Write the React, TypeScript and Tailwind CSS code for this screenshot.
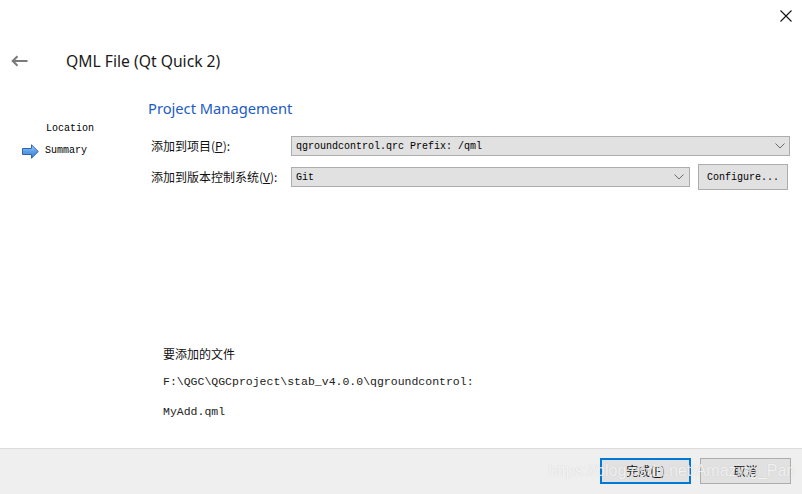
import React from "react";

const cjk = { fontFamily: '"Noto Sans CJK SC", "Noto Sans", sans-serif' };
const mono = { fontFamily: '"Liberation Mono", "Noto Sans CJK SC", monospace' };

function Chevron() {
  return (
    <svg width="10" height="6" viewBox="0 0 10 6" className="shrink-0">
      <path d="M0.5 0.5 L5 5 L9.5 0.5" fill="none" stroke="#6a6a6a" strokeWidth="1" />
    </svg>
  );
}

function BlueArrow() {
  return (
    <svg width="17" height="15" viewBox="0 0 17 15">
      <defs>
        <linearGradient id="ba" x1="0" y1="0" x2="0" y2="1">
          <stop offset="0" stopColor="#a8d0f5" />
          <stop offset="0.5" stopColor="#5a9ee6" />
          <stop offset="1" stopColor="#3a7fd0" />
        </linearGradient>
      </defs>
      <path
        d="M0.5 4.5 H9.5 V0.8 L16.3 7.5 L9.5 14.2 V10.5 H0.5 Z"
        fill="url(#ba)"
        stroke="#2f64b0"
        strokeWidth="1"
        strokeLinejoin="round"
      />
    </svg>
  );
}

export default function App() {
  return (
    <div className="relative w-[802px] h-[494px] bg-white flex flex-col overflow-hidden text-black" style={{ fontFamily: '"Noto Sans", sans-serif' }}>
      {/* top bar */}
      <div className="h-[32px] flex justify-end items-center pr-[10px] shrink-0">
        <svg width="12" height="12" viewBox="0 0 12 12">
          <path d="M0.5 0.5 L11.5 11.5 M11.5 0.5 L0.5 11.5" stroke="#111" strokeWidth="1.1" />
        </svg>
      </div>

      {/* title row */}
      <div className="h-[58px] flex items-center shrink-0">
        <div className="w-[66px] pl-[11px] flex items-center">
          <svg width="17" height="12" viewBox="0 0 17 12">
            <path d="M16.5 6 H2 M6.5 1.2 L1.7 6 L6.5 10.8" fill="none" stroke="#7a7a7a" strokeWidth="2" />
          </svg>
        </div>
        <div className="text-[15.7px] leading-[20px] text-[#1a1a1a]">QML File (Qt Quick 2)</div>
      </div>

      {/* body */}
      <div className="flex-1 flex">
        <div className="w-[148px] shrink-0 pt-[32px] text-[10px] leading-[14px]" style={mono}>
          <div className="pl-[46px]">Location</div>
          <div className="flex items-center mt-[8px] pl-[22px] gap-[6px]">
            <BlueArrow />
            <span className="-mt-[1px]">Summary</span>
          </div>
        </div>

        <div className="flex-1 flex flex-col pt-[8px]">
          <div className="text-[14.7px] leading-[20px] text-[#1b5cc4]">Project Management</div>

          <div className="mt-[18px] flex items-center h-[20px]">
            <div className="w-[143px] pl-[3px] text-[12px] text-[#111]" style={cjk}>
              添加到项目(<span className="underline">P</span>):
            </div>
            <div className="w-[499px] h-[20px] bg-[#e1e1e1] border border-[#adadad] flex items-center justify-between pl-[4px] pr-[4px]">
              <span className="text-[10px]" style={mono}>qgroundcontrol.qrc Prefix: /qml</span>
              <Chevron />
            </div>
          </div>

          <div className="mt-[8px] flex items-center h-[26px]">
            <div className="w-[143px] pl-[3px] text-[12px] text-[#111] whitespace-nowrap" style={cjk}>
              添加到版本控制系统(<span className="underline">V</span>):
            </div>
            <div className="w-[399px] h-[20px] bg-[#e1e1e1] border border-[#adadad] flex items-center justify-between pl-[4px] pr-[5px]">
              <span className="text-[10px]" style={mono}>Git</span>
              <Chevron />
            </div>
            <div className="ml-[8px] w-[90px] h-[26px] bg-[#e1e1e1] border border-[#adadad] flex items-center justify-center">
              <span className="text-[10px]" style={mono}>Configure...</span>
            </div>
          </div>

          <div className="mt-[156px] pl-[15px] text-[12px] leading-[16px] text-[#111]" style={cjk}>要添加的文件</div>
          <div className="mt-[12px] pl-[15px] text-[11.5px] leading-[16px] text-[#222]" style={mono}>
            F:\QGC\QGCproject\stab_v4.0.0\qgroundcontrol:
          </div>
          <div className="mt-[14px] pl-[15px] text-[11.5px] leading-[16px] text-[#222]" style={mono}>MyAdd.qml</div>
        </div>
      </div>

      {/* footer */}
      <div className="h-[46px] shrink-0 bg-[#efefef] border-t border-[#dcdcdc] flex items-start justify-end pt-[9px] pr-[11px] gap-[9px]">
        <div className="w-[91px] h-[26px] bg-[#e1e1e1] border-2 border-[#0078d7] flex items-center justify-center text-[12px] text-[#111]" style={cjk}>
          完成(<span className="underline">F</span>)
        </div>
        <div className="w-[91px] h-[26px] bg-[#e1e1e1] border border-[#adadad] flex items-center justify-center text-[12px] text-[#111]" style={cjk}>
          取消
        </div>
      </div>

      {/* watermark */}
      <div
        className="absolute left-[548px] top-[461px] text-[16px] leading-[20px] text-white/80 pointer-events-none whitespace-nowrap"
        style={{ fontFamily: '"Liberation Sans", sans-serif', textShadow: "0 0 1px rgba(0,0,0,0.2)" }}
      >
        https://blog.csdn.net/Amazing_Pan
      </div>
    </div>
  );
}
